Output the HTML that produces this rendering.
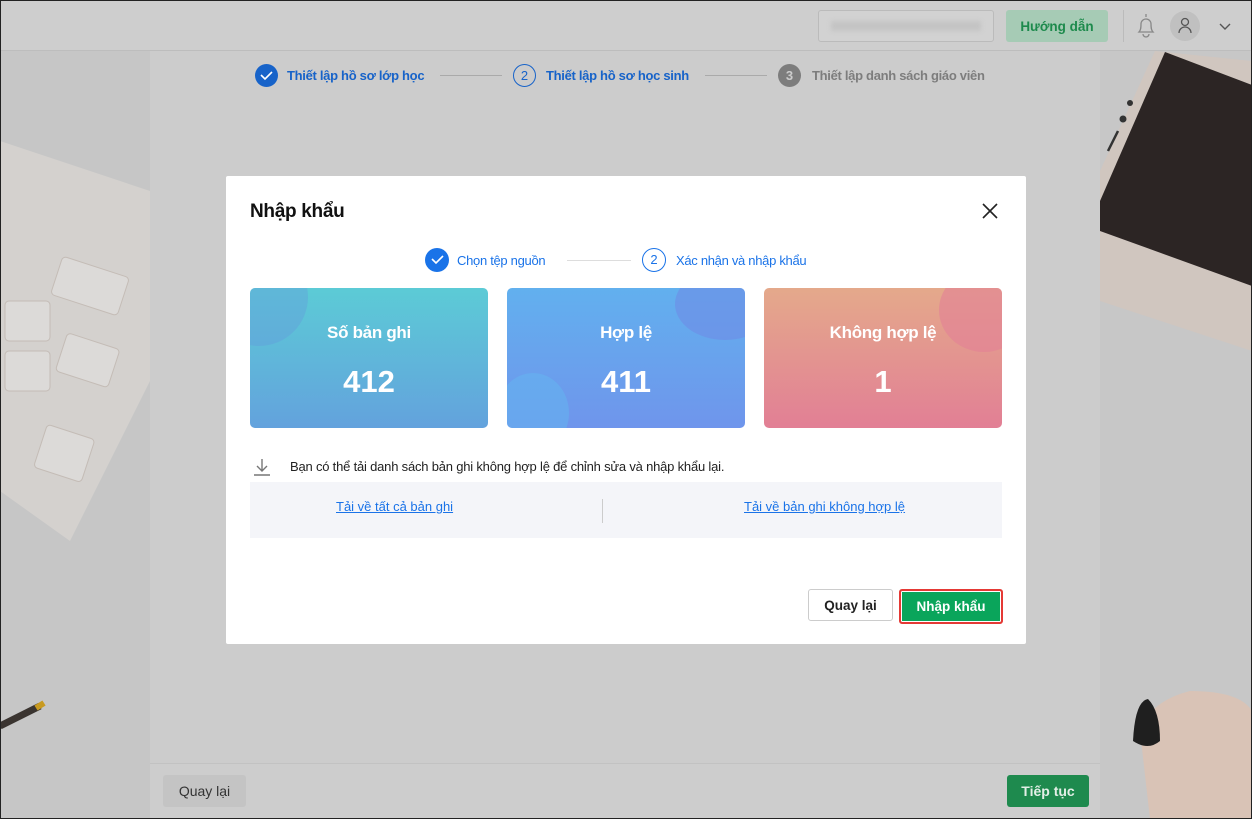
<!DOCTYPE html>
<html style="overflow:hidden;width:1252px;height:819px"><head><meta charset="utf-8">
<style>
*{margin:0;padding:0;box-sizing:border-box}
body{width:1252px;height:819px;overflow:hidden;font-family:"Liberation Sans",sans-serif;position:relative;background:#c9c9c9}
.abs{position:absolute}
.hdr{left:0;top:0;width:1252px;height:51px;background:#cecece;border-bottom:1px solid #bdbdbd;z-index:2}
.panel{left:150px;top:51px;width:950px;height:768px;background:#cccccc}
.foot{left:150px;top:763px;width:950px;height:56px;background:#cdcdcd;border-top:1px solid #c2c2c2}
.btn{position:absolute;border-radius:3px;font-size:14px;font-weight:bold;display:flex;align-items:center;justify-content:center;z-index:3}
.modal{left:226px;top:176px;width:800px;height:468px;background:#fff;border-radius:2px}
.card{position:absolute;top:112px;width:238px;height:140px;border-radius:5px;overflow:hidden;color:#fff;text-align:center}
.card .t{position:absolute;top:35px;width:100%;font-size:17px;font-weight:bold;letter-spacing:-0.3px}
.card .n{position:absolute;top:76px;width:100%;font-size:31px;font-weight:bold}
.circ{position:absolute;border-radius:50%}
.step{font-size:13px;letter-spacing:-0.3px}
a{color:#1a73e8;text-decoration:underline;font-size:13px}
</style></head><body>
<div class="abs hdr"></div>
<div class="abs" style="left:818px;top:10px;width:176px;height:32px;border:1px solid #bbb;border-radius:3px;background:#d2d2d2;z-index:3"><div style="margin:10px 12px;height:10px;background:#c4c4c4;filter:blur(2px)"></div></div>
<div class="btn" style="left:1006px;top:10px;width:102px;height:32px;background:#a6cbb5;color:#1d8a4c;font-size:13.5px">Hướng dẫn</div>
<div class="abs" style="left:1123px;top:10px;width:1px;height:32px;background:#bbb;z-index:3"></div>
<svg class="abs" style="left:1134px;top:12px;z-index:3" width="24" height="28" viewBox="0 0 24 28"><path d="M12 2v3M5 20c2-2 2-5 2-8a5 5 0 0 1 10 0c0 3 0 6 2 8z M9 22a3 3 0 0 0 6 0" fill="none" stroke="#888" stroke-width="1.3"/></svg>
<div class="abs" style="left:1170px;top:11px;width:30px;height:30px;border-radius:50%;background:#c0c0c0;z-index:3"></div>
<svg class="abs" style="left:1177px;top:17px;z-index:3" width="16" height="18" viewBox="0 0 16 18"><circle cx="8" cy="5" r="3.5" fill="none" stroke="#555" stroke-width="1.3"/><path d="M2 16a6 6 0 0 1 12 0" fill="none" stroke="#555" stroke-width="1.3"/></svg>
<svg class="abs" style="left:1219px;top:23px;z-index:3" width="12" height="8"><path d="M1 1l5 5 5-5" fill="none" stroke="#555" stroke-width="1.4"/></svg>

<!-- left photo -->
<svg class="abs" style="left:0;top:51px" width="150" height="768">
<rect width="150" height="768" fill="#c6c6c6"/>
<polygon points="0,90 150,140 150,330 70,490 0,440" fill="#d4d1ce"/>
<g fill="#dcdad8" stroke="#c4bcb6">
<rect x="55" y="215" width="70" height="40" rx="4" transform="rotate(18 90 235)"/>
<rect x="5" y="250" width="45" height="40" rx="4"/>
<rect x="5" y="300" width="45" height="40" rx="4"/>
<rect x="60" y="290" width="55" height="40" rx="4" transform="rotate(18 90 310)"/>
<rect x="40" y="380" width="50" height="45" rx="4" transform="rotate(18 65 400)"/>
</g>
<line x1="0" y1="675" x2="40" y2="655" stroke="#3a3430" stroke-width="7"/>
<line x1="36" y1="657" x2="44" y2="652" stroke="#c89a20" stroke-width="6"/>
</svg>
<!-- right photo -->
<svg class="abs" style="left:1100px;top:51px" width="152" height="768">
<rect width="152" height="768" fill="#c7c7c7"/>
<polygon points="55,0 152,10 152,300 0,250 0,120" fill="#d0c6bf"/>
<polygon points="65,1 152,34 152,235 0,180 0,150" fill="#2c2524"/>
<circle cx="30" cy="52" r="3" fill="#333"/><circle cx="23" cy="68" r="3.5" fill="#333"/>
<line x1="18" y1="80" x2="8" y2="100" stroke="#333" stroke-width="2.5"/>
<path d="M40 680 Q50 650 90 640 Q140 640 152 660 L152 768 L50 768 Z" fill="#d9c3b6"/>
<path d="M33 690 Q35 650 48 648 Q60 660 60 690 Q48 700 33 690Z" fill="#1f1f1f"/>
</svg>

<div class="abs panel"></div>
<!-- stepper top -->
<div class="abs" style="left:255px;top:64px;width:23px;height:23px;border-radius:50%;background:#1763c9"></div>
<svg class="abs" style="left:260px;top:70px" width="13" height="11"><path d="M1 5l4 4 7-7" fill="none" stroke="#fff" stroke-width="1.6"/></svg>
<div class="abs step" style="left:287px;top:68px;color:#1763c9;font-weight:bold">Thiết lập hồ sơ lớp học</div>
<div class="abs" style="left:440px;top:75px;width:62px;height:1px;background:#aaa"></div>
<div class="abs" style="left:513px;top:64px;width:23px;height:23px;border-radius:50%;border:1px solid #1763c9;color:#1763c9;font-size:13px;text-align:center;line-height:21px">2</div>
<div class="abs step" style="left:546px;top:68px;color:#1763c9;font-weight:bold">Thiết lập hồ sơ học sinh</div>
<div class="abs" style="left:705px;top:75px;width:62px;height:1px;background:#aaa"></div>
<div class="abs" style="left:778px;top:64px;width:23px;height:23px;border-radius:50%;background:#7d7d7d;color:#ccc;font-size:13px;text-align:center;line-height:23px;font-weight:bold">3</div>
<div class="abs step" style="left:812px;top:68px;color:#7d7d7d;font-weight:bold">Thiết lập danh sách giáo viên</div>

<div class="abs foot"></div>
<div class="btn" style="left:163px;top:775px;width:83px;height:32px;background:#c4c4c4;color:#333;font-weight:normal">Quay lại</div>
<div class="btn" style="left:1007px;top:775px;width:82px;height:32px;background:#1e8a4e;color:#e3efe7">Tiếp tục</div>

<div class="abs modal">
  <div class="abs" style="left:24px;top:25px;font-size:19px;color:#111;letter-spacing:-0.3px;font-weight:bold">Nhập khẩu</div>
  <svg class="abs" style="left:756px;top:27px" width="16" height="16"><path d="M1 1l14 14M15 1L1 15" stroke="#222" stroke-width="1.6"/></svg>
  <div class="abs" style="left:199px;top:72px;width:24px;height:24px;border-radius:50%;background:#1a73e8"></div>
  <svg class="abs" style="left:205px;top:78px" width="13" height="11"><path d="M1 5l4 4 7-7" fill="none" stroke="#fff" stroke-width="1.6"/></svg>
  <div class="abs step" style="left:231px;top:77px;color:#1a73e8">Chọn tệp nguồn</div>
  <div class="abs" style="left:341px;top:84px;width:64px;height:1px;background:#ddd"></div>
  <div class="abs" style="left:416px;top:72px;width:24px;height:24px;border-radius:50%;border:1px solid #1a73e8;color:#1a73e8;font-size:13px;text-align:center;line-height:22px">2</div>
  <div class="abs step" style="left:450px;top:77px;color:#1a73e8">Xác nhận và nhập khẩu</div>

  <div class="card" style="left:24px;background:linear-gradient(180deg,#5ccbd6,#63a2dd)">
    <div class="circ" style="left:-40px;top:-40px;width:98px;height:98px;background:rgba(100,150,220,.35)"></div>
    <div class="t">Số bản ghi</div><div class="n">412</div></div>
  <div class="card" style="left:281px;background:linear-gradient(180deg,#62b0ee,#6f95ec)">
    <div class="circ" style="left:168px;top:-20px;width:100px;height:72px;background:rgba(110,140,230,.6);border-radius:50%"></div>
    <div class="circ" style="left:-10px;top:85px;width:72px;height:80px;background:rgba(100,180,240,.55)"></div>
    <div class="t">Hợp lệ</div><div class="n">411</div></div>
  <div class="card" style="left:538px;background:linear-gradient(180deg,#e4a98b,#e27f95)">
    <div class="circ" style="left:175px;top:-20px;width:90px;height:84px;background:rgba(226,128,150,.6)"></div>
    <div class="t">Không hợp lệ</div><div class="n">1</div></div>

  <svg class="abs" style="left:27px;top:282px" width="18" height="18"><path d="M9 1v11M4 8l5 5 5-5M1 17h16" fill="none" stroke="#777" stroke-width="1.4"/></svg>
  <div class="abs" style="left:64px;top:283px;font-size:13px;color:#222;letter-spacing:-0.2px">Bạn có thể tải danh sách bản ghi không hợp lệ để chỉnh sửa và nhập khẩu lại.</div>
  <div class="abs" style="left:24px;top:306px;width:752px;height:56px;background:#f4f5f9"></div>
  <div class="abs" style="left:376px;top:323px;width:1px;height:24px;background:#ccc"></div>
  <a class="abs" style="left:110px;top:323px">Tải về tất cả bản ghi</a>
  <a class="abs" style="left:518px;top:323px">Tải về bản ghi không hợp lệ</a>

  <div class="btn" style="left:582px;top:413px;width:85px;height:32px;border:1px solid #ccc;background:#fff;color:#222;font-size:13.5px">Quay lại</div>
  <div class="btn" style="left:673px;top:413px;width:104px;height:35px;background:#0aa55b;color:#fff;border:2px solid #e53935;box-shadow:inset 0 0 0 1px #fff;font-size:13.5px">Nhập khẩu</div>
</div>
<div class="abs" style="left:0;top:0;width:1252px;height:819px;border:1px solid #222;z-index:10;pointer-events:none"></div>
</body></html>
